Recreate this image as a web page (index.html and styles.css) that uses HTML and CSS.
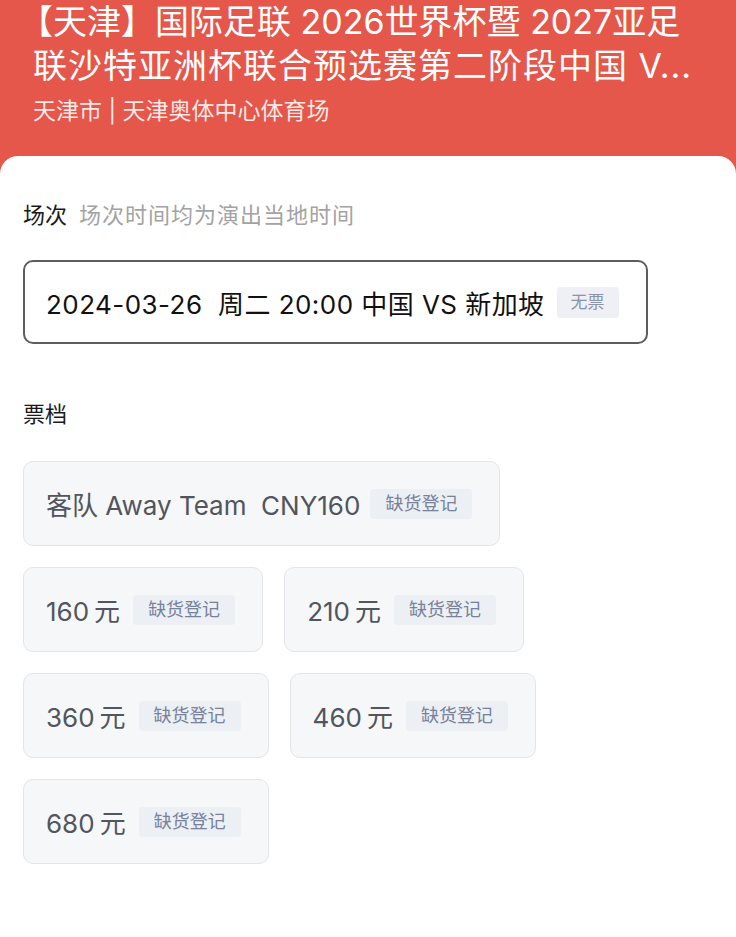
FILE: index.html
```html
<!DOCTYPE html>
<html lang="zh-CN">
<head>
<meta charset="utf-8">
<title>天津 国际足联 2026世界杯预选赛</title>
<link rel="stylesheet" href="styles.css">
</head>
<body>
<header class="hero">
  <h1 class="hero-title"><span class="title-line"><span class="bracket">【</span>天津】国际足联 2026世界杯暨 2027亚足</span><span class="title-line title-line-2">联沙特亚洲杯联合预选赛第二阶段中国 V...</span></h1>
  <p class="hero-venue">天津市 | 天津奥体中心体育场</p>
</header>
<main class="sheet">
  <section class="block">
    <h2 class="block-title">场次<span class="block-hint">场次时间均为演出当地时间</span></h2>
    <div class="session">
      <span class="session-text">2024-03-26&nbsp;&nbsp;周二 20:00 中国 VS 新加坡</span>
      <span class="tag">无票</span>
    </div>
  </section>
  <section class="block tickets-block">
    <h2 class="block-title">票档</h2>
    <div class="tickets">
      <div class="ticket"><span class="ticket-name">客队 Away Team&nbsp;&nbsp;CNY160</span><span class="tag tag-lg">缺货登记</span></div>
      <div class="ticket ticket-price"><span class="ticket-name">160<span class="unit">元</span></span><span class="tag tag-lg">缺货登记</span></div>
      <div class="ticket ticket-price"><span class="ticket-name">210<span class="unit">元</span></span><span class="tag tag-lg">缺货登记</span></div>
      <div class="ticket ticket-price"><span class="ticket-name">360<span class="unit">元</span></span><span class="tag tag-lg">缺货登记</span></div>
      <div class="ticket ticket-price"><span class="ticket-name">460<span class="unit">元</span></span><span class="tag tag-lg">缺货登记</span></div>
      <div class="ticket ticket-price"><span class="ticket-name">680<span class="unit">元</span></span><span class="tag tag-lg">缺货登记</span></div>
    </div>
  </section>
</main>
</body>
</html>
```
FILE: styles.css
```css
* { box-sizing: border-box; }
html, body { margin: 0; padding: 0; }
body {
  background: #ffffff;
  font-family: "Inter", "Noto Sans CJK SC", sans-serif;
  color: #111;
}
.hero {
  background: #e5574b;
  color: #fff;
  padding: 0 24px 60px 33px;
  height: 175px;
}
.hero-title {
  margin: 0;
  font-size: 34px;
  line-height: 44px;
  font-weight: 400;
  white-space: nowrap;
}
.title-line { display: block; }
.title-line-2 { letter-spacing: 1px; }
.bracket {
  display: inline-block;
  margin-left: -14px;
}
.hero-venue {
  margin: 8px 0 0;
  font-size: 23px;
  line-height: 30px;
  color: rgba(255,255,255,0.88);
}
.sheet {
  background: #fff;
  border-radius: 18px 18px 0 0;
  margin-top: -19px;
  padding: 45px 23px 40px;
  position: relative;
}
.block-title {
  margin: 0;
  font-size: 22px;
  line-height: 28px;
  font-weight: 400;
  color: #1a1a1a;
}
.block-hint {
  margin-left: 12px;
  color: #a3a3a3;
  letter-spacing: 1px;
}
.session {
  margin-top: 31px;
  width: 625px;
  height: 84px;
  border: 2px solid #5c5d60;
  border-radius: 10px;
  display: flex;
  align-items: center;
  padding: 0 21px;
}
.session-text {
  font-size: 26px;
  letter-spacing: 0.45px;
  color: #111;
}
.tag {
  margin-left: 12px;
  background: #eef0f5;
  color: #8a93a8;
  font-size: 17px;
  line-height: 31px;
  padding: 0 14px;
  border-radius: 4px;
}
.tickets-block { margin-top: 56px; }
.tickets {
  margin-top: 33px;
  display: flex;
  flex-wrap: wrap;
  gap: 21px 21px;
  max-width: 520px;
}
.ticket {
  height: 85px;
  display: flex;
  align-items: center;
  padding: 0 27px 0 22px;
  background: #f6f7f9;
  border: 1px solid #e3e5e9;
  border-radius: 10px;
}
.ticket-name {
  font-size: 26px;
  color: #51555d;
}
.unit { margin-left: 5px; }
.tag-lg {
  font-size: 18px;
  line-height: 30px;
  padding: 0 15px;
  margin-left: 10px;
  background: #eceff4;
  color: #77829a;
}
.ticket-price .tag-lg { margin-left: 13px; }
```
